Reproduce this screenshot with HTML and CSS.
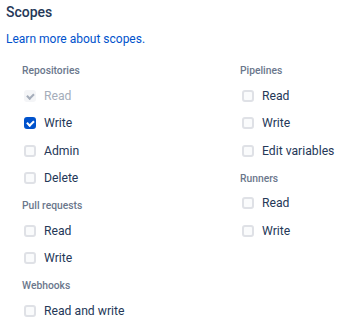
FILE: index.html
```html
<!DOCTYPE html>
<html lang="en">
<head>
    <meta charset="UTF-8">
    <meta name="viewport" content="width=device-width, initial-scale=1.0">
    <title>Scopes</title>
    <link rel="stylesheet" href="styles.css">
</head>
<body>

    <div class="scopes">
        <h3>Scopes</h3>
        <a href="#" class="learn-link">Learn more about scopes.</a>

        <div class="scope-grid">
            <div class="scope-col">
                <div class="group-label">Repositories</div>
                <label class="scope-row disabled"><input type="checkbox" checked disabled><span class="box"></span>Read</label>
                <label class="scope-row"><input type="checkbox" checked><span class="box"></span>Write</label>
                <label class="scope-row"><input type="checkbox"><span class="box"></span>Admin</label>
                <label class="scope-row"><input type="checkbox"><span class="box"></span>Delete</label>

                <div class="group-label">Pull requests</div>
                <label class="scope-row"><input type="checkbox"><span class="box"></span>Read</label>
                <label class="scope-row"><input type="checkbox"><span class="box"></span>Write</label>

                <div class="group-label">Webhooks</div>
                <label class="scope-row"><input type="checkbox"><span class="box"></span>Read and write</label>
            </div>

            <div class="scope-col">
                <div class="group-label">Pipelines</div>
                <label class="scope-row"><input type="checkbox"><span class="box"></span>Read</label>
                <label class="scope-row"><input type="checkbox"><span class="box"></span>Write</label>
                <label class="scope-row"><input type="checkbox"><span class="box"></span>Edit variables</label>

                <div class="group-label">Runners</div>
                <label class="scope-row"><input type="checkbox"><span class="box"></span>Read</label>
                <label class="scope-row"><input type="checkbox"><span class="box"></span>Write</label>
            </div>
        </div>
    </div>

</body>
</html>
```

FILE: styles.css
```css
body {
    font-family: Roboto, "Liberation Sans", Arial, sans-serif;
    background-color: #ffffff;
    color: #253858;
    margin: 0;
    padding: 0;
}

.scopes {
    padding: 3px 6px 0 6px;
}

h3 {
    margin: 0;
    font-size: 14px;
    font-weight: 500;
    line-height: 18px;
    color: #253858;
}

.learn-link {
    display: block;
    margin-top: 10px;
    font-size: 12px;
    line-height: 16px;
    color: #0052cc;
    text-decoration: none;
}

.scope-grid {
    display: grid;
    grid-template-columns: 218px 1fr;
    margin-top: 12px;
    padding-left: 16px;
}

.group-label {
    height: 23px;
    line-height: 23px;
    margin-top: 2px;
    font-size: 10.3px;
    font-weight: 500;
    color: #6b778c;
}

.group-label:first-child {
    margin-top: 0;
}

.scope-row {
    display: flex;
    align-items: center;
    height: 27.5px;
    padding-left: 2px;
    font-size: 12.2px;
    color: #253858;
    cursor: pointer;
}

.scope-row input {
    display: none;
}

.scope-row .box {
    position: relative;
    box-sizing: border-box;
    width: 12px;
    height: 12px;
    margin-right: 8px;
    border: 2px solid #dfe1e6;
    border-radius: 3px;
    background-color: #fafbfc;
}

.scope-row input:checked + .box {
    background-color: #0052cc;
    border-color: #0052cc;
}

.scope-row input:checked + .box::after {
    content: "";
    position: absolute;
    left: 2px;
    top: 0;
    width: 2.5px;
    height: 5px;
    border: solid #ffffff;
    border-width: 0 2px 2px 0;
    transform: rotate(45deg);
}

.scope-row.disabled {
    color: #a5adba;
    cursor: default;
}

.scope-row.disabled input:checked + .box {
    background-color: #f4f5f7;
    border-color: #f4f5f7;
}

.scope-row.disabled input:checked + .box::after {
    border-color: #a5adba;
}
```
